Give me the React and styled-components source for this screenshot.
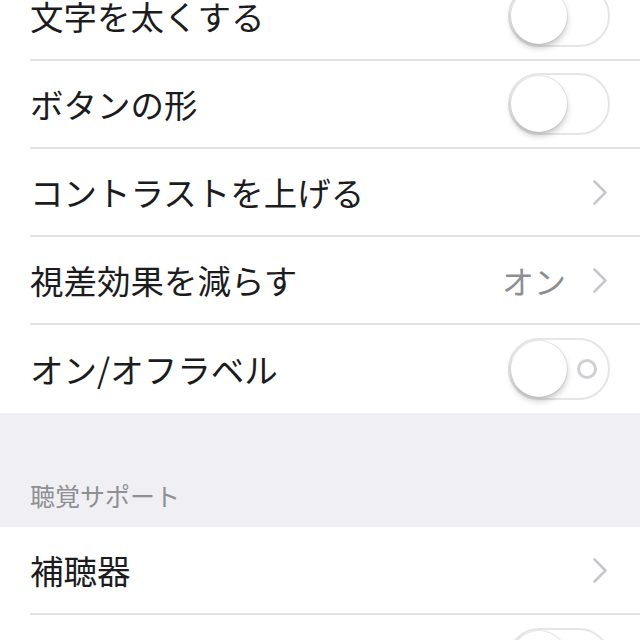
import React from 'react';
import styled, { createGlobalStyle } from 'styled-components';

const GlobalStyle = createGlobalStyle`
  html, body {
    margin: 0;
    padding: 0;
    background: #efeff4;
    overflow: hidden;
  }
  body {
    font-family: "Noto Sans CJK JP", "Noto Sans", sans-serif;
    -webkit-font-smoothing: antialiased;
  }
`;

const Screen = styled.div`
  width: 640px;
  height: 640px;
  overflow: hidden;
  background: #efeff4;
  display: flex;
  flex-direction: column;
`;

const Group = styled.div`
  background: #ffffff;
  display: flex;
  flex-direction: column;
  margin-top: ${(p) => p.$offset || 0}px;
  flex-shrink: 0;
`;

const Row = styled.div`
  display: flex;
  padding-left: 30px;
  height: 88px;
  flex-shrink: 0;
`;

const RowInner = styled.div`
  flex: 1;
  display: flex;
  align-items: center;
  padding-right: 30px;
  border-bottom: ${(p) => (p.$last ? 'none' : '2px solid #e2e2e6')};
`;

const Label = styled.span`
  flex: 1;
  font-size: 33.5px;
  color: #1c1c1e;
  line-height: 1;
  white-space: nowrap;
`;

const Value = styled.span`
  font-size: 32px;
  color: #8e8e93;
  line-height: 1;
  margin-right: 26px;
`;

const Chevron = styled.svg`
  width: 16px;
  height: 27px;
  margin-right: 2px;
  flex-shrink: 0;
`;

const Track = styled.div`
  width: 102px;
  height: 62px;
  box-sizing: border-box;
  border: 2px solid #e6e6ea;
  border-radius: 31px;
  background: #ffffff;
  padding: 1px;
  display: flex;
  align-items: center;
  flex-shrink: 0;
`;

const Knob = styled.div`
  width: 56px;
  height: 56px;
  border-radius: 50%;
  background: #ffffff;
  box-shadow: 0 4px 6px rgba(0, 0, 0, 0.22), 0 0 0 1px rgba(0, 0, 0, 0.08);
`;

const OffMark = styled.div`
  width: 20px;
  height: 20px;
  box-sizing: border-box;
  border: 3px solid #cfcfd3;
  border-radius: 50%;
  margin-left: auto;
  margin-right: 10px;
`;

const SectionHeader = styled.div`
  height: 114px;
  display: flex;
  align-items: flex-end;
  padding: 0 30px 17px;
  box-sizing: border-box;
  font-size: 25px;
  line-height: 30px;
  color: #8e8e93;
  flex-shrink: 0;
`;

function Switch({ labels }) {
  return (
    <Track>
      <Knob />
      {labels && <OffMark />}
    </Track>
  );
}

function Disclosure() {
  return (
    <Chevron viewBox="0 0 16 27">
      <polyline points="2.5,2.5 13.5,13.5 2.5,24.5" fill="none" stroke="#c7c7cc" strokeWidth="2.6" strokeLinecap="round" strokeLinejoin="round" />
    </Chevron>
  );
}

const displayRows = [
  { label: '文字を太くする', kind: 'switch' },
  { label: 'ボタンの形', kind: 'switch' },
  { label: 'コントラストを上げる', kind: 'link' },
  { label: '視差効果を減らす', kind: 'link', value: 'オン' },
  { label: 'オン/オフラベル', kind: 'switch', labels: true },
];

const hearingRows = [
  { label: '補聴器', kind: 'link' },
  { label: 'LEDフラッシュ通知', kind: 'switch' },
];

function SettingRow({ item, last }) {
  return (
    <Row>
      <RowInner $last={last}>
        <Label>{item.label}</Label>
        {item.value && <Value>{item.value}</Value>}
        {item.kind === 'link' ? <Disclosure /> : <Switch labels={item.labels} />}
      </RowInner>
    </Row>
  );
}

export default function App() {
  return (
    <>
      <GlobalStyle />
      <Screen>
        <Group $offset={-27}>
          {displayRows.map((item, i) => (
            <SettingRow key={item.label} item={item} last={i === displayRows.length - 1} />
          ))}
        </Group>
        <SectionHeader>聴覚サポート</SectionHeader>
        <Group>
          {hearingRows.map((item, i) => (
            <SettingRow key={item.label} item={item} last={i === hearingRows.length - 1} />
          ))}
        </Group>
      </Screen>
    </>
  );
}
